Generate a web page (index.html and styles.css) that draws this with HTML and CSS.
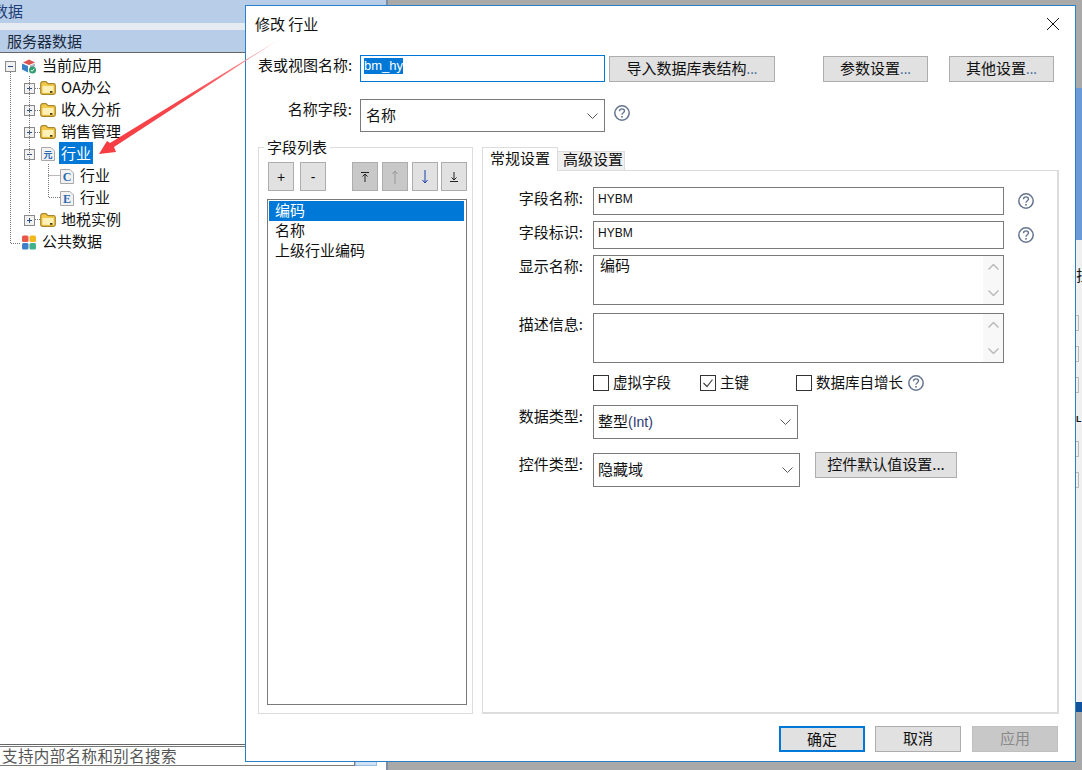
FILE: index.html
```html
<!DOCTYPE html>
<html lang="zh">
<head>
<meta charset="utf-8">
<title>修改 行业</title>
<link rel="stylesheet" href="styles.css">
</head>
<body>
<div class="desktop">
  <aside class="side">
    <div class="side-title"><span>数据</span></div>
    <div class="side-gap"></div>
    <div class="side-head">服务器数据</div>
    <div class="tree">
      <svg class="tree-lines" width="70" height="200" viewBox="0 0 70 200">
        <g fill="none" stroke="#777" stroke-dasharray="1 1">
          <path d="M10.500 19V190.500H21"/>
          <path d="M29.500 23V161"/>
          <path d="M35 35.500H40M35 57.500H40M35 79.500H40M35 166.500H40"/>
          <path d="M48.500 111V144.500H60M48.500 122.500H60"/>
        </g>
      </svg>
      <div class="row root">
        <svg class="exp" viewBox="0 0 11 11"><rect x=".5" y=".5" width="10" height="10" fill="#f1f1f1" stroke="#8a8a8a"/><path d="M3 5.500H8" stroke="#2b4c7e"/></svg>
        <svg class="ico14" viewBox="0 0 14 14"><path d="M7 0L13 3L7 5.500L1 3Z" fill="#d9534f"/><path d="M0 4L6 6.500V13L0 10Z" fill="#3b82c4"/><path d="M8 6L13 4V7L8 9Z" fill="#a9b7c6"/><circle cx="10.500" cy="10.500" r="3.500" fill="#2f9e6e"/><path d="M8.800 10.500L10 11.800L12.300 9.300" fill="none" stroke="#fff"/></svg>
        <span class="lbl">当前应用</span>
      </div>
      <div class="row lv1">
        <svg class="exp" viewBox="0 0 11 11"><rect x=".5" y=".5" width="10" height="10" fill="#f1f1f1" stroke="#8a8a8a"/><path d="M3 5.500H8M5.500 3V8" stroke="#2b4c7e"/></svg>
        <svg class="folder" viewBox="0 0 16 14"><path d="M.7 3Q.7 .7 3 .7H6L8 2.700H13.500Q15.300 2.700 15.300 4.500V11.500Q15.300 13.300 13.500 13.300H2.500Q.7 13.300 .7 11.500Z" fill="#f3c94a" stroke="#a8862a" stroke-width="1.200"/><rect x="2.500" y="5" width="11" height="6.800" fill="#fff0b8"/><rect x="10" y="10" width="2.500" height="1.800" fill="#4a3c12"/></svg>
        <span class="lbl">OA办公</span>
      </div>
      <div class="row lv1">
        <svg class="exp" viewBox="0 0 11 11"><rect x=".5" y=".5" width="10" height="10" fill="#f1f1f1" stroke="#8a8a8a"/><path d="M3 5.500H8M5.500 3V8" stroke="#2b4c7e"/></svg>
        <svg class="folder" viewBox="0 0 16 14"><path d="M.7 3Q.7 .7 3 .7H6L8 2.700H13.500Q15.300 2.700 15.300 4.500V11.500Q15.300 13.300 13.500 13.300H2.500Q.7 13.300 .7 11.500Z" fill="#f3c94a" stroke="#a8862a" stroke-width="1.200"/><rect x="2.500" y="5" width="11" height="6.800" fill="#fff0b8"/><rect x="10" y="10" width="2.500" height="1.800" fill="#4a3c12"/></svg>
        <span class="lbl">收入分析</span>
      </div>
      <div class="row lv1">
        <svg class="exp" viewBox="0 0 11 11"><rect x=".5" y=".5" width="10" height="10" fill="#f1f1f1" stroke="#8a8a8a"/><path d="M3 5.500H8M5.500 3V8" stroke="#2b4c7e"/></svg>
        <svg class="folder" viewBox="0 0 16 14"><path d="M.7 3Q.7 .7 3 .7H6L8 2.700H13.500Q15.300 2.700 15.300 4.500V11.500Q15.300 13.300 13.500 13.300H2.500Q.7 13.300 .7 11.500Z" fill="#f3c94a" stroke="#a8862a" stroke-width="1.200"/><rect x="2.500" y="5" width="11" height="6.800" fill="#fff0b8"/><rect x="10" y="10" width="2.500" height="1.800" fill="#4a3c12"/></svg>
        <span class="lbl">销售管理</span>
      </div>
      <div class="row lv1 table-row">
        <svg class="exp" viewBox="0 0 11 11"><rect x=".5" y=".5" width="10" height="10" fill="#f1f1f1" stroke="#8a8a8a"/><path d="M3 5.500H8" stroke="#2b4c7e"/></svg>
        <svg class="doc" viewBox="0 0 14 14"><path d="M.5.500H10L13.500 4V13.500H.5Z" fill="#f2f2f2" stroke="#a8a8a8"/><text x="7" y="11" text-anchor="middle" class="doc-cn">元</text></svg>
        <span class="lbl sel">行业</span>
      </div>
      <div class="row lv2">
        <svg class="ico14" viewBox="0 0 14 15"><path d="M.5.500H10L13.500 4V14.500H.5Z" fill="#f2f2f2" stroke="#a8a8a8"/><text x="7" y="12" text-anchor="middle" class="doc-l">C</text></svg>
        <span class="lbl">行业</span>
      </div>
      <div class="row lv2">
        <svg class="ico14" viewBox="0 0 14 15"><path d="M.5.500H10L13.500 4V14.500H.5Z" fill="#f2f2f2" stroke="#a8a8a8"/><text x="7" y="12" text-anchor="middle" class="doc-l">E</text></svg>
        <span class="lbl">行业</span>
      </div>
      <div class="row lv1">
        <svg class="exp" viewBox="0 0 11 11"><rect x=".5" y=".5" width="10" height="10" fill="#f1f1f1" stroke="#8a8a8a"/><path d="M3 5.500H8M5.500 3V8" stroke="#2b4c7e"/></svg>
        <svg class="folder" viewBox="0 0 16 14"><path d="M.7 3Q.7 .7 3 .7H6L8 2.700H13.500Q15.300 2.700 15.300 4.500V11.500Q15.300 13.300 13.500 13.300H2.500Q.7 13.300 .7 11.500Z" fill="#f3c94a" stroke="#a8862a" stroke-width="1.200"/><rect x="2.500" y="5" width="11" height="6.800" fill="#fff0b8"/><rect x="10" y="10" width="2.500" height="1.800" fill="#4a3c12"/></svg>
        <span class="lbl">地税实例</span>
      </div>
      <div class="row root">
        <span class="exp-gap"></span>
        <svg class="ico14" viewBox="0 0 14 14"><rect x="0" y="0" width="6.500" height="6.500" rx="1.500" fill="#e8574a"/><rect x="7.500" y="0" width="6.500" height="6.500" rx="1.500" fill="#f4b81f"/><rect x="0" y="7.500" width="6.500" height="6.500" rx="1.500" fill="#3f7fc9"/><rect x="7.500" y="7.500" width="6.500" height="6.500" rx="1.500" fill="#3fb28a"/></svg>
        <span class="lbl">公共数据</span>
      </div>
    </div>
    <div class="search">
      <div class="search-input">支持内部名称和别名搜索</div>
      <div class="search-btn"></div>
    </div>
  </aside>

  <div class="edge">
    <div class="edge-grey"></div>
    <div class="edge-blue"></div>
    <div class="edge-light">
      <span class="edge-char">拉</span>
      <i class="tick"></i><i class="tick"></i><i class="tick"></i>
      <b class="edge-l">L</b>
      <i class="tick"></i><i class="tick"></i>
    </div>
    <div class="edge-dark"></div>
  </div>

  <section class="dialog">
    <header class="title">
      <span>修改 行业</span>
      <svg class="close" width="14" height="14" viewBox="0 0 14 14"><path d="M1 1L13 13M13 1L1 13" stroke="#111" fill="none"/></svg>
    </header>

    <div class="top-row">
      <label class="top-label">表或视图名称:</label>
      <div class="box focus name-input"><span class="hl">bm_hy</span></div>
      <button class="btn import">导入数据库表结构<em>...</em></button>
      <button class="btn setting first">参数设置<em>...</em></button>
      <button class="btn setting second">其他设置<em>...</em></button>
    </div>

    <div class="name-row">
      <label class="top-label">名称字段:</label>
      <div class="box select name-select"><span>名称</span><svg class="chev" width="11" height="6" viewBox="0 0 11 6"><path d="M.5.500L5.500 5.500L10.500.500" fill="none" stroke="#555"/></svg></div>
      <svg class="help" width="16" height="16" viewBox="0 0 16 16"><circle cx="8" cy="8" r="7.200" fill="none" stroke="#64748f" stroke-width="1.500"/><path d="M5.500 6.200C5.500 4.700 6.600 3.900 8 3.900S10.500 4.800 10.500 6.100C10.500 7.700 8 7.800 8 9.700" fill="none" stroke="#64748f" stroke-width="1.400"/><rect x="7.200" y="11" width="1.600" height="1.600" fill="#64748f"/></svg>
    </div>

    <div class="main">
      <div class="group">
        <span class="legend">字段列表</span>
        <div class="tools">
          <button class="tool">+</button>
          <button class="tool">-</button>
          <button class="tool dim sp"><svg width="10" height="10" viewBox="0 0 10 10"><path d="M1 .5H9M5 2V10M2.500 4.500L5 2L7.500 4.500" fill="none" stroke="#222"/></svg></button>
          <button class="tool dim"><svg width="10" height="14" viewBox="0 0 10 14"><path d="M5 1V14M2.500 4L5 1L7.500 4" fill="none" stroke="#999"/></svg></button>
          <button class="tool"><svg width="10" height="14" viewBox="0 0 10 14"><path d="M5 0V13M2.500 10L5 13L7.500 10" fill="none" stroke="#1b3fae"/></svg></button>
          <button class="tool"><svg width="10" height="10" viewBox="0 0 10 10"><path d="M1 9.500H9M5 0V8M2.500 5.500L5 8L7.500 5.500" fill="none" stroke="#222"/></svg></button>
        </div>
        <ul class="list">
          <li class="active">编码</li>
          <li>名称</li>
          <li>上级行业编码</li>
        </ul>
      </div>

      <div class="tabs">
        <div class="tab-bar">
          <div class="tab on">常规设置</div>
          <div class="tab off">高级设置</div>
        </div>
        <div class="panel">
          <div class="field">
            <label>字段名称:</label>
            <div class="box text">HYBM</div>
            <svg class="help" width="16" height="16" viewBox="0 0 16 16"><circle cx="8" cy="8" r="7.200" fill="none" stroke="#64748f" stroke-width="1.500"/><path d="M5.500 6.200C5.500 4.700 6.600 3.900 8 3.900S10.500 4.800 10.500 6.100C10.500 7.700 8 7.800 8 9.700" fill="none" stroke="#64748f" stroke-width="1.400"/><rect x="7.200" y="11" width="1.600" height="1.600" fill="#64748f"/></svg>
          </div>
          <div class="field">
            <label>字段标识:</label>
            <div class="box text">HYBM</div>
            <svg class="help" width="16" height="16" viewBox="0 0 16 16"><circle cx="8" cy="8" r="7.200" fill="none" stroke="#64748f" stroke-width="1.500"/><path d="M5.500 6.200C5.500 4.700 6.600 3.900 8 3.900S10.500 4.800 10.500 6.100C10.500 7.700 8 7.800 8 9.700" fill="none" stroke="#64748f" stroke-width="1.400"/><rect x="7.200" y="11" width="1.600" height="1.600" fill="#64748f"/></svg>
          </div>
          <div class="field area-field">
            <label>显示名称:</label>
            <div class="box area"><span class="area-text">编码</span>
              <div class="sb"><svg width="11" height="6" viewBox="0 0 11 6"><path d="M.5 5.500L5.500.5L10.500 5.500" fill="none" stroke="#bbb" stroke-width="1.500"/></svg><svg width="11" height="6" viewBox="0 0 11 6"><path d="M.5.500L5.500 5.500L10.500.5" fill="none" stroke="#bbb" stroke-width="1.500"/></svg></div>
            </div>
          </div>
          <div class="field area-field gap2">
            <label>描述信息:</label>
            <div class="box area"><span class="area-text"></span>
              <div class="sb"><svg width="11" height="6" viewBox="0 0 11 6"><path d="M.5 5.500L5.500.5L10.500 5.500" fill="none" stroke="#bbb" stroke-width="1.500"/></svg><svg width="11" height="6" viewBox="0 0 11 6"><path d="M.5.500L5.500 5.500L10.500.5" fill="none" stroke="#bbb" stroke-width="1.500"/></svg></div>
            </div>
          </div>
          <div class="checks">
            <span class="check c1"><i class="cb"></i><span>虚拟字段</span></span>
            <span class="check c2"><i class="cb"><svg width="14" height="14" viewBox="0 0 14 14"><path d="M2.500 7L6 10.500L11.500 3.500" fill="none" stroke="#444" stroke-width="1.200"/></svg></i><span>主键</span></span>
            <span class="check"><i class="cb"></i><span>数据库自增长</span></span>
            <svg class="help" width="16" height="16" viewBox="0 0 16 16"><circle cx="8" cy="8" r="7.200" fill="none" stroke="#64748f" stroke-width="1.500"/><path d="M5.500 6.200C5.500 4.700 6.600 3.900 8 3.900S10.500 4.800 10.500 6.100C10.500 7.700 8 7.800 8 9.700" fill="none" stroke="#64748f" stroke-width="1.400"/><rect x="7.200" y="11" width="1.600" height="1.600" fill="#64748f"/></svg>
          </div>
          <div class="field sel-field">
            <label>数据类型:</label>
            <div class="box select type-select"><span>整型<small>(Int)</small></span><svg class="chev" width="11" height="6" viewBox="0 0 11 6"><path d="M.5.500L5.500 5.500L10.500.500" fill="none" stroke="#555"/></svg></div>
          </div>
          <div class="field sel-field ctl">
            <label>控件类型:</label>
            <div class="box select ctl-select"><span>隐藏域</span><svg class="chev" width="11" height="6" viewBox="0 0 11 6"><path d="M.5.500L5.500 5.500L10.500.500" fill="none" stroke="#555"/></svg></div>
            <button class="btn ctl-btn">控件默认值设置...</button>
          </div>
        </div>
      </div>
    </div>

    <footer class="foot">
      <button class="btn act primary">确定</button>
      <button class="btn act">取消</button>
      <button class="btn act disabled">应用</button>
    </footer>
  </section>

  <svg class="arrow" width="290" height="170" viewBox="0 0 290 170">
    <defs>
      <linearGradient id="ag" gradientUnits="userSpaceOnUse" x1="278" y1="40" x2="100" y2="154">
        <stop offset="0" stop-color="#fbd0d2"/>
        <stop offset=".25" stop-color="#f7777b"/>
        <stop offset=".5" stop-color="#f7474d"/>
        <stop offset="1" stop-color="#f53c42"/>
      </linearGradient>
    </defs>
    <path d="M278 40L114 147L116 152L99 154L107 141L110 143Z" fill="url(#ag)"/>
  </svg>
</div>
</body>
</html>
```
FILE: styles.css
```css
* { box-sizing: border-box; }
html, body { margin: 0; padding: 0; }
body { font-family: "Noto Sans CJK SC", "Noto Sans", sans-serif; font-size: 15px; color: #111; }
.desktop { position: relative; width: 1082px; height: 770px; overflow: hidden; background: #a9a9a9; display: flex; justify-content: space-between; }

.side { width: 388px; height: 770px; background: #fff; display: flex; flex-direction: column; border-right: 2px solid #7d8ea5; }
.side-title { height: 23px; background: #b7cde8; color: #1f3f78; line-height: 21px; overflow: hidden; }
.side-title span { display: block; margin-left: -7px; }
.side-gap { height: 7px; background: #e6ebf2; }
.side-head { height: 23px; background: #b7cde8; border-bottom: 1px solid #666; padding-left: 7px; line-height: 22px; color: #1a2a40; }
.tree { position: relative; flex: 1; padding-top: 1px; }
.tree-lines { position: absolute; left: 0; top: 0; }
.row { height: 22px; display: flex; align-items: center; }
.root { padding-left: 5px; }
.lv1 { padding-left: 24px; }
.lv2 { padding-left: 60px; }
.exp { width: 11px; height: 11px; flex: none; margin-top: 2px; }
.exp-gap { width: 11px; flex: none; }
.ico14 { width: 14px; height: 15px; flex: none; margin-top: 2px; }
.root .ico14 { margin-left: 6px; }
.root .lbl { margin-left: 6px; }
.folder { width: 16px; height: 14px; flex: none; margin: 2px 0 0 5px; }
.doc { width: 14px; height: 14px; flex: none; margin: 2px 0 0 6px; }
.lbl { margin-left: 5px; line-height: 22px; white-space: nowrap; }
.lv2 .lbl { margin-left: 6px; }
.table-row .lbl { margin-left: 4px; }
.sel { background: #0078d7; color: #fff; padding: 0 2px; }
.doc-cn { font-size: 9px; font-weight: 700; fill: #2a6ab0; }
.doc-l { font-family: "Liberation Serif", serif; font-size: 12px; font-weight: 700; fill: #2a6ab0; }
.search { height: 22px; display: flex; margin-bottom: 4px; border-top: 1px solid #666; padding-top: 1px; }
.search-input { width: 355px; height: 20px; border: 1px solid #7a7a7a; border-left: 0; font-size: 15.500px; color: #555; line-height: 17px; padding-left: 2px; letter-spacing: .4px; white-space: nowrap; overflow: hidden; }
.search-btn { width: 22px; height: 20px; background: #cfe3f7; border: 1px solid #9cbde0; }

.edge { width: 6px; height: 770px; display: flex; flex-direction: column; }
.edge-grey { height: 88px; }
.edge-blue { height: 152px; background: #6b9ad8; }
.edge-light { height: 462px; background: #f0f0f0; position: relative; overflow: hidden; display: flex; flex-direction: column; align-items: flex-start; padding-top: 25px; }
.edge-char { width: 15px; height: 20px; line-height: 20px; margin-bottom: 30px; flex: none; }
.tick { display: block; width: 3px; height: 16px; border: 1px solid #bbb; border-left: 0; margin-bottom: 15px; flex: none; }
.edge-l { font: 700 9px "Liberation Sans", sans-serif; height: 10px; line-height: 10px; margin: 6px 0 17px; flex: none; }
.edge-dark { height: 10px; background: #0f539c; }

.dialog { position: absolute; left: 245px; top: 5px; width: 831px; height: 757px; background: #fff; border: 1px solid #2b7fc6; display: flex; flex-direction: column; }
.title { height: 38px; flex: none; padding: 0 15px 0 9px; display: flex; align-items: center; justify-content: space-between; }
.title span { padding-bottom: 3px; }
.close { flex: none; margin-bottom: 2px; }

.box { border: 1px solid #7a7a7a; background: #fff; flex: none; }
.focus { border-color: #0078d7; }
.top-row { margin-top: 11px; padding-left: 12px; display: flex; align-items: flex-start; height: 27px; }
.top-label { width: 94px; flex: none; text-align: right; white-space: nowrap; line-height: 20px; }
.name-input { width: 245px; height: 27px; margin-left: 8px; padding: 2px 0 0 3px; font: 13px/16px "Liberation Sans", sans-serif; }
.hl { background: #0078d7; color: #fff; display: inline-block; height: 16px; line-height: 16px; }
.btn { font: inherit; color: #111; background: #e1e1e1; border: 1px solid #adadad; height: 26px; padding: 0 0 3px; margin: 0; flex: none; white-space: nowrap; }
.btn em { font-style: normal; color: #2a5a90; font-size: 13px; }
.import { width: 166px; margin-left: 4px; margin-top: 1px; }
.setting { width: 105px; margin-top: 1px; }
.first { margin-left: 48px; }
.second { margin-left: 21px; }
.name-row { margin-top: 17px; padding-left: 12px; display: flex; align-items: flex-start; height: 33px; }
.name-select { width: 245px; height: 33px; margin-left: 8px; }
.select { display: flex; align-items: center; justify-content: space-between; padding: 0 6px 0 5px; }
.select span { padding-bottom: 3px; }
.chev { flex: none; }
.help { flex: none; }
.name-row .help { margin: 6px 0 0 9px; }

.main { margin-top: 15px; padding-left: 12px; display: flex; height: 567px; flex: none; }
.group { position: relative; width: 215px; height: 567px; border: 1px solid #dcdcdc; padding: 14px 0 0 9px; flex: none; }
.legend { position: absolute; left: 5px; top: -11px; background: #fff; padding: 0 3px; line-height: 20px; }
.tools { display: flex; height: 29px; }
.tool { width: 26px; height: 29px; padding: 0; margin: 0 6px 0 0; background: #e1e1e1; border: 1px solid #adadad; font: 14px/1 "Liberation Sans", sans-serif; color: #111; display: flex; align-items: center; justify-content: center; flex: none; }
.tool.sp { margin-left: 20px; margin-right: 4px; }
.tool.dim { background: #c8c8c8; margin-right: 4px; }
.tools .tool:nth-child(5) { margin-right: 3px; }
.list { list-style: none; margin: 8px 0 0 -1px; padding: 1px; width: 200px; height: 506px; border: 1px solid #7a7a7a; }
.list li { height: 20px; line-height: 18px; padding-left: 6px; width: 195px; }
.list .active { background: #0078d7; color: #fff; }

.tabs { margin-left: 9px; width: 577px; flex: none; display: flex; flex-direction: column; }
.tab-bar { display: flex; height: 24px; align-items: flex-end; flex: none; position: relative; z-index: 1; }
.on { width: 76px; height: 24px; background: #fff; border: 1px solid #dcdcdc; border-bottom: 0; line-height: 19px; text-align: center; }
.off { width: 67px; height: 20px; background: #f0f0f0; border: 1px solid #dcdcdc; border-left: 0; line-height: 14px; padding-left: 5px; white-space: nowrap; }
.panel { height: 544px; margin-top: -1px; border: 1px solid #dcdcdc; border-width: 1px 2px 2px 1px; padding-top: 16px; }
.field { display: flex; margin-bottom: 6px; align-items: flex-start; }
.field label { width: 100px; flex: none; text-align: right; line-height: 22px; white-space: nowrap; }
.text { width: 411px; height: 28px; margin-left: 10px; font: 12px/22px "Liberation Sans", sans-serif; padding-left: 4px; }
.field > .help { margin: 6px 0 0 14px; }
.area { width: 411px; height: 50px; margin-left: 10px; display: flex; justify-content: space-between; }
.area-text { padding-left: 6px; line-height: 18px; }
.sb { width: 20px; height: 48px; background: #f8f8f8; display: flex; flex-direction: column; align-items: center; justify-content: space-between; padding: 8px 0; }
.area-field { margin-bottom: 8px; }
.gap2 { margin-bottom: 12px; }
.checks { display: flex; align-items: center; height: 16px; margin: 0 0 14px 110px; white-space: nowrap; font-size: 14.500px; }
.check { display: flex; align-items: center; line-height: 16px; }
.check span { padding-bottom: 2px; }
.c1 { width: 107px; }
.c2 { width: 96px; }
.cb { width: 16px; height: 16px; border: 1px solid #333; margin-right: 4px; display: flex; align-items: center; justify-content: center; background: #fff; flex: none; }
.checks .help { margin-left: 5px; }
.sel-field { margin-bottom: 14px; }
.type-select { width: 205px; height: 34px; margin-left: 10px; padding-left: 4px; }
.ctl-select { width: 207px; height: 34px; margin-left: 10px; padding-left: 4px; }
.select small { font: 14px "Liberation Sans", sans-serif; color: #2a3a70; }
.ctl-btn { width: 142px; height: 26px; margin-left: 15px; margin-top: -1px; }

.foot { flex: none; margin-top: 12px; padding-right: 17px; display: flex; justify-content: flex-end; }
.act { width: 86px; height: 26px; margin-left: 10px; }
.act + .disabled { margin-left: 11px; }
.primary { border: 2px solid #0078d7; }
.disabled { background: #c8c8c8; border-color: #c0c0c0; color: #8a8a8a; }

.arrow { position: absolute; left: 0; top: 0; pointer-events: none; }
```
